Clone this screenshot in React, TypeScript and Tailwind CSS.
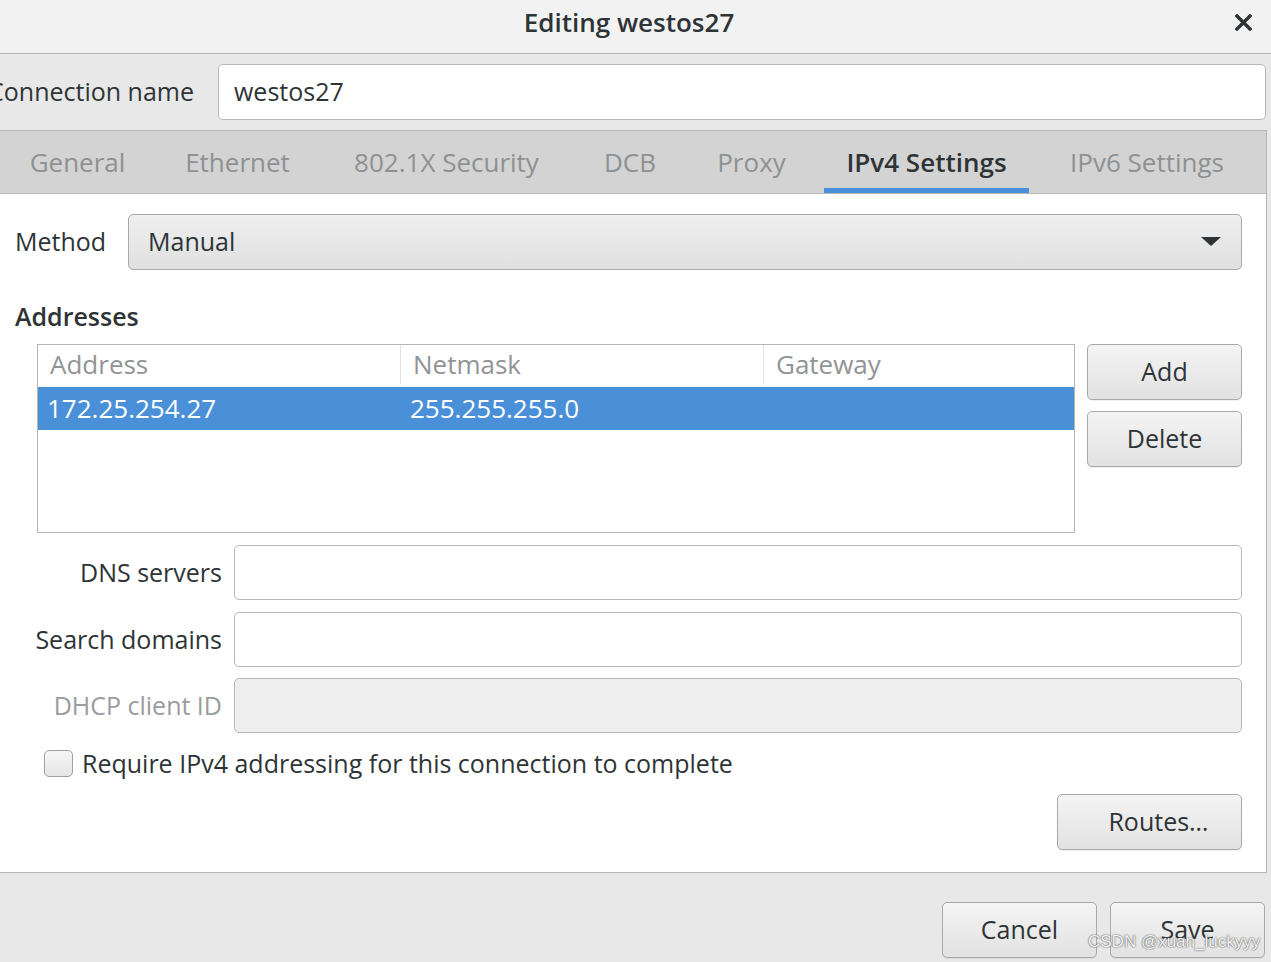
import React from "react";

function GtkButton({ children, className = "" }: { children: React.ReactNode; className?: string }) {
  return (
    <div
      className={
        "flex items-center justify-center rounded-[5px] border border-[#a9a9a9] bg-linear-to-b from-[#f4f4f4] to-[#e2e2e2] text-[25px] text-[#2e3436] shadow-[0_1px_0_rgba(0,0,0,0.06)] " +
        className
      }
    >
      {children}
    </div>
  );
}

function TextInput({ className = "", disabled = false, children }: { className?: string; disabled?: boolean; children?: React.ReactNode }) {
  return (
    <div
      className={
        "flex h-[55px] items-center rounded-[5px] border border-[#b8b8b8] px-[15px] text-[25px] text-[#2e3436] " +
        (disabled ? "bg-[#eeeeee]" : "bg-white") +
        " " +
        className
      }
    >
      {children}
    </div>
  );
}

const tabs: { label: string; w: number; active?: boolean }[] = [
  { label: "General", w: 155 },
  { label: "Ethernet", w: 165 },
  { label: "802.1X Security", w: 253 },
  { label: "DCB", w: 114 },
  { label: "Proxy", w: 129 },
  { label: "IPv4 Settings", w: 221, active: true },
  { label: "IPv6 Settings", w: 220 },
];

export default function App() {
  return (
    <div className="relative h-[962px] w-[1271px] overflow-hidden bg-[#e8e8e8] font-['Open_Sans','Noto_Sans',sans-serif] text-[#2e3436]">
      {/* Title bar */}
      <div className="relative flex h-[54px] items-center justify-center border-b border-[#b4b4b4] bg-[#f2f2f2] pb-[9px] pr-[13px]">
        <span className="text-[26px] font-semibold text-[#2e3436]">Editing westos27</span>
        <svg className="absolute left-[1235px] top-[14px]" width="17" height="17" viewBox="0 0 17 17">
          <path d="M2 2 L15 15 M15 2 L2 15" stroke="#2e3436" strokeWidth="3.4" strokeLinecap="square" />
        </svg>
      </div>

      {/* Connection name row */}
      <div className="flex h-[76px] items-center">
        <div className="flex w-[194px] shrink-0 justify-end whitespace-nowrap text-[25px] text-[#2e3436]">
          Connection name
        </div>
        <div className="ml-[24px] flex h-[56px] w-[1048px] items-center rounded-[5px] border border-[#b8b8b8] bg-white pl-[15px] text-[25px] text-[#2e3436]">
          westos27
        </div>
      </div>

      {/* Notebook */}
      <div className="w-[1267px] border-r border-[#b6b6b6]">
        <div className="flex h-[64px] border-y border-[#b8b8b8] bg-[#d3d3d3]">
          {tabs.map((t) => (
            <div
              key={t.label}
              style={{ width: t.w }}
              className="relative flex shrink-0 items-center justify-center whitespace-nowrap text-[26px]"
            >
              <span className={t.active ? "font-semibold text-[#2e3436]" : "text-[#8e9192]"}>{t.label}</span>
              {t.active && <div className="absolute bottom-0 left-[8px] right-[8px] h-[5px] bg-[#4a90d9]" />}
            </div>
          ))}
        </div>

        {/* Page */}
        <div className="h-[679px] border-b border-[#b8b8b8] bg-white pt-[20px]">
          {/* Method */}
          <div className="flex items-center pl-[15px]">
            <div className="w-[113px] text-[25px]">Method</div>
            <div className="flex h-[56px] w-[1114px] items-center justify-between rounded-[5px] border border-[#a9a9a9] bg-linear-to-b from-[#efefef] to-[#e0e0e0] pl-[19px] pr-[20px] text-[25px]">
              <span>Manual</span>
              <svg width="20" height="10" viewBox="0 0 20 10">
                <path d="M0 0 L20 0 L10 9 Z" fill="#2e3436" />
              </svg>
            </div>
          </div>

          {/* Addresses */}
          <div className="mt-[30px] pl-[15px] text-[25px] font-semibold leading-[32px]">Addresses</div>

          <div className="mt-[12px] flex pl-[37px]">
            <div className="h-[189px] w-[1038px] border border-[#b6b6b6] bg-white">
              <div className="grid h-[42px] grid-cols-[362px_1px_362px_1px_1fr] pb-[3px] text-[26px] text-[#919496]">
                <div className="flex items-center pl-[12px]">Address</div>
                <div className="bg-[#e2e2e2]" />
                <div className="flex items-center pl-[12px]">Netmask</div>
                <div className="bg-[#e2e2e2]" />
                <div className="flex items-center pl-[12px]">Gateway</div>
              </div>
              <div className="grid h-[43px] grid-cols-[363px_363px_1fr] bg-[#4a90d9] text-[26px] text-white">
                <div className="flex items-center pl-[9px]">172.25.254.27</div>
                <div className="flex items-center pl-[9px]">255.255.255.0</div>
                <div />
              </div>
            </div>
            <div className="ml-[12px] flex flex-col gap-[11px]">
              <GtkButton className="h-[56px] w-[155px]">Add</GtkButton>
              <GtkButton className="h-[56px] w-[155px]">Delete</GtkButton>
            </div>
          </div>

          {/* DNS / search / DHCP */}
          <div className="mt-[12px] flex items-center">
            <div className="w-[222px] shrink-0 text-right text-[25px]">DNS servers</div>
            <TextInput className="ml-[12px] w-[1008px]" />
          </div>
          <div className="mt-[12px] flex items-center">
            <div className="w-[222px] shrink-0 text-right text-[25px]">Search domains</div>
            <TextInput className="ml-[12px] w-[1008px]" />
          </div>
          <div className="mt-[11px] flex items-center">
            <div className="w-[222px] shrink-0 text-right text-[25px] text-[#9a9c9d]">DHCP client ID</div>
            <TextInput disabled className="ml-[12px] w-[1008px]" />
          </div>

          {/* Checkbox */}
          <div className="mt-[12px] flex h-[36px] items-center pl-[44px]">
            <div className="h-[27px] w-[29px] rounded-[5px] border border-[#a0a0a0] bg-linear-to-b from-[#f6f6f6] to-[#e6e6e6]" />
            <span className="ml-[9px] text-[25px] leading-[36px]">Require IPv4 addressing for this connection to complete</span>
          </div>

          {/* Routes */}
          <div className="mt-[13px] flex justify-end pr-[24px]">
            <GtkButton className="h-[56px] w-[185px] pl-[18px]">Routes…</GtkButton>
          </div>
        </div>
      </div>

      {/* Bottom buttons */}
      <div className="mt-[29px] flex justify-end gap-[13px] pr-[6px]">
        <GtkButton className="h-[56px] w-[155px]">Cancel</GtkButton>
        <GtkButton className="h-[56px] w-[155px]">Save</GtkButton>
      </div>

      <div className="absolute left-[1088px] top-[932px] whitespace-nowrap font-['Liberation_Sans',sans-serif] text-[17px] leading-[20px] text-[#f4f4f4] [text-shadow:0_0_1px_#555,0_0_2px_#777]">
        CSDN @xuan_luckyyy
      </div>
    </div>
  );
}
